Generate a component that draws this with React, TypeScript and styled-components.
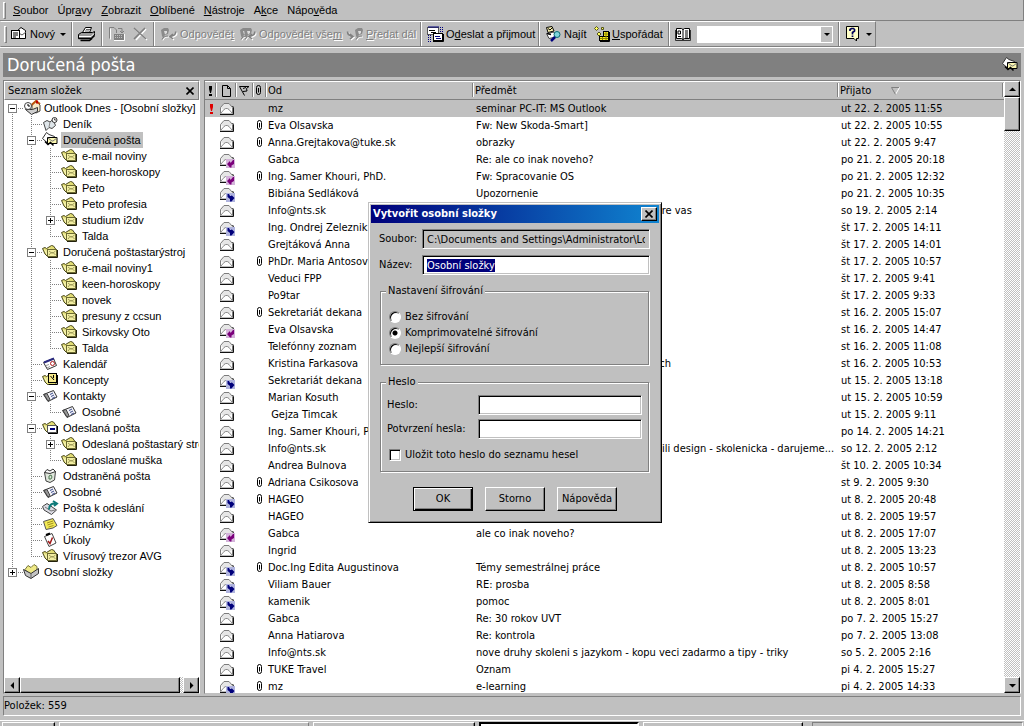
import React, { useEffect, useRef, useState } from "react";
import styled, { createGlobalStyle, css } from "styled-components";

const face = "#c0c0c0";
const shade = "#808080";
const tahoma = '"DejaVu Sans Condensed", "DejaVu Sans", sans-serif';
const system = '"Liberation Sans", Arial, sans-serif';

const GlobalStyle = createGlobalStyle`
  *, *::before, *::after { box-sizing: border-box; }
  body { margin: 0; background: ${face}; color: #000; font: 11px/16px ${system}; }
  button, input { font: inherit; color: inherit; margin: 0; }
  ::selection { background: #00007b; color: #fff; }
`;

const raised = css`
  border: 1px solid;
  border-color: #fff #000 #000 #fff;
  box-shadow: inset -1px -1px 0 ${shade};
  background: ${face};
`;

const sunken = css`
  border: 1px solid;
  border-color: ${shade} #fff #fff ${shade};
  box-shadow: inset 1px 1px 0 #000, inset -1px -1px 0 ${face};
`;

const dither = css`
  background: repeating-conic-gradient(#fff 0 25%, ${face} 0 50%) 0 0 / 2px 2px;
`;

/* ---------- window frame ---------- */

const Window = styled.div`
  position: relative;
  display: flex;
  flex-direction: column;
  height: 100vh;
  overflow: hidden;
`;

const Grip = styled.span`
  width: 3px;
  height: 17px;
  margin-left: 3px;
  border: 1px solid;
  border-color: #fff ${shade} ${shade} #fff;
`;

const MenuBar = styled.nav`
  display: flex;
  align-items: center;
  flex: none;
  height: 21px;
  border-right: 1px solid ${shade};
  border-bottom: 1px solid ${shade};
`;

const MenuItem = styled.button`
  border: 0;
  padding: 0 0 0 5px;
  margin-right: 4px;
  background: none;
  line-height: 16px;
  &:first-of-type { margin-left: 2px; }
`;

const ToolBand = styled.div`
  display: flex;
  flex: none;
  height: 27px;
  border-bottom: 1px solid #fff;
`;

const Tools = styled.div`
  display: flex;
  align-items: center;
  border: 1px solid;
  border-color: #fff ${shade} ${shade} transparent;
`;

const ToolSpace = styled.span`
  width: 4px;
`;

const ToolSeparator = styled.span`
  align-self: stretch;
  width: 2px;
  margin: 0 5px;
  border-left: 1px solid ${shade};
  border-right: 1px solid #fff;
`;

const ToolButton = styled.button<{ $width: number }>`
  display: flex;
  align-items: center;
  gap: 2px;
  width: ${(p) => p.$width}px;
  height: 22px;
  padding: 0;
  border: 0;
  background: none;
  white-space: nowrap;
  svg { flex: none; }
  &:disabled { color: ${shade}; text-shadow: 1px 1px 0 #fff; }
`;

const Caret = styled.span`
  width: 0;
  border: 3px solid transparent;
  border-top-color: #000;
  border-bottom: 0;
  margin-left: 3px;
`;

const Combo = styled.div`
  display: flex;
  width: 136px;
  height: 17px;
  background: #fff;
  border: 1px solid #fff;
  margin-left: 6px;
  input { flex: 1; min-width: 0; border: 0; padding: 0 2px; background: none; outline: 0; }
  button {
    width: 11px;
    padding: 0;
    border: 0;
    background: ${face};
    display: flex;
    align-items: center;
    justify-content: center;
  }
  ${Caret} { margin: 0; }
`;

const Banner = styled.header`
  display: flex;
  align-items: center;
  justify-content: space-between;
  flex: none;
  height: 24px;
  margin: 5px 3px 3px;
  padding: 0 3px 0 4px;
  background: ${shade};
  color: #fff;
  h1 { margin: 0; font: 18px/24px ${tahoma}; }
`;

const Main = styled.main`
  display: grid;
  grid-template-columns: 197px minmax(0, 1fr);
  gap: 4px;
  flex: 1;
  min-height: 0;
  margin: 0 3px;
`;

const Pane = styled.section`
  display: flex;
  min-height: 0;
  min-width: 0;
  overflow: hidden;
  background: #fff;
  border: 1px solid;
  border-color: ${shade} #fff ${face} ${shade};
`;

const FolderPane = styled(Pane)`
  flex-direction: column;
`;

const PaneTitle = styled.div`
  display: flex;
  align-items: center;
  justify-content: space-between;
  flex: none;
  height: 19px;
  padding: 0 4px 0 3px;
  background: ${face};
  border: 1px solid;
  border-color: #fff ${shade} ${shade} #fff;
  font: 11px/16px ${tahoma};
  button { display: flex; padding: 0; border: 0; background: none; }
`;

const StatusBar = styled.footer`
  flex: none;
  height: 20px;
  margin: 2px 3px 0;
  border: 1px solid;
  border-color: ${shade} #fff #fff ${shade};
  font: 11px/18px ${tahoma};
`;

const TaskBar = styled.div`
  display: flex;
  flex: none;
  height: 6px;
  margin-top: 4px;
  padding: 1px 1px 0 2px;
  border-top: 1px solid #fff;
  overflow: hidden;
`;

const TaskSlot = styled.span<{ $width?: number; $kind: "button" | "active" | "bar" | "tray" }>`
  height: 20px;
  margin-right: 4px;
  ${(p) => (p.$width ? `width: ${p.$width}px;` : "flex: 1; margin-left: 5px; margin-right: 0;")}
  ${(p) => p.$kind === "button" && raised}
  ${(p) => p.$kind === "active" && css`border: 2px solid #000; border-right-color: #fff; background: #fff;`}
  ${(p) => p.$kind === "bar" && css`border: solid #fff; border-width: 1px 0 0 1px; border-right: 1px solid ${shade};`}
  ${(p) => p.$kind === "tray" && css`border: 1px solid; border-color: ${shade} #fff #fff ${shade};`}
`;

/* ---------- scroll bars ---------- */

const ScrollButton = styled.button`
  ${raised}
  display: flex;
  align-items: center;
  justify-content: center;
  flex: none;
  width: 16px;
  height: 16px;
  padding: 0;
`;

const Track = styled.div<{ $across?: boolean }>`
  ${dither}
  display: flex;
  flex: none;
  flex-direction: ${(p) => (p.$across ? "row" : "column")};
`;

const Thumb = styled.div<{ $length?: number }>`
  ${raised}
  ${(p) => (p.$length ? `height: ${p.$length}px;` : "flex: 1;")}
`;

const TrackGap = styled.span<{ $size?: number }>`
  ${(p) => (p.$size ? `width: ${p.$size}px;` : "flex: 1;")}
`;

const arrowPaths = {
  up: "M0 5h7L3.500 1.500z",
  down: "M0 2h7L3.500 5.500z",
  left: "M5 0v7L1.500 3.500z",
  right: "M2 0v7L5.500 3.500z",
};

const Arrow = ({ to }: { to: keyof typeof arrowPaths }) => (
  <svg width="7" height="7" viewBox="0 0 7 7"><path d={arrowPaths[to]} /></svg>
);

/* ---------- icons ---------- */

const Pic = ({ children, w = 16, h = 16 }: { children: React.ReactNode; w?: number; h?: number }) => (
  <svg width={w} height={h} viewBox={`0 0 ${w} ${h}`} fill="none" stroke="#000" aria-hidden="true">
    {children}
  </svg>
);

const FolderBack = () => (
  <>
    <path d="M5.500 12.500L3 10L0.500 4.500L3 3.500L4.500 4.500L9.500 1.500L11.500 2L14 5.500V12.500z" fill="#e2dd74" stroke="#4c4a20" />
    <path d="M2.500 5.500L5 10.500V6L8 4.500" fill="none" stroke="#f8f6bc" />
  </>
);

const MailFolder = () => (
  <Pic>
    <FolderBack />
    <rect x="5.500" y="5.500" width="9" height="7" fill="#f3efa2" stroke="#6b6932" />
    <path d="M7 11l2-2.500h2L13.500 11M7 7l2.500 2h1.500L13.500 7" stroke="#a29e5c" />
    <path d="M6 13.500h9.500V6" stroke="#22210c" />
  </Pic>
);

const Inbox = () => (
  <Pic>
    <path d="M0.500 6.500L4.500 0.500L7 2.500L12.500 4.500V7L5 10.500z" fill="#fff" stroke="#333" />
    <path d="M5.500 5.500h9.500v6H5.500z" fill="#fbf7b0" />
    <path d="M6 6l4 3h1l4-3" stroke="#777" />
    <path d="M3 9.500l3 3 2.500-2 3 3" strokeWidth="1.500" />
  </Pic>
);

const TodayIcon = () => (
  <Pic w={18}>
    <path d="M9 5l4-4 4 4v6l-4 2-4-2z" fill="#f7e9c8" stroke="#444" />
    <path d="M8 5.500L13 1l4 3" stroke="#b8540a" strokeWidth="2" />
    <path d="M14 0.500v3" stroke="#c00000" strokeWidth="2" />
    <path d="M2.500 9.500l6 5 6-3v-4l-5 2z" fill="#cfcfcf" stroke="#333" />
    <circle cx="5" cy="6" r="3.500" fill="#fff" stroke="#444" />
    <path d="M5 4v2h2" />
  </Pic>
);

const JournalIcon = () => (
  <Pic>
    <path d="M1.500 6.500L5 4.500L8 6L11 3.500L13.500 9.500L10 12.500L7 11.500L4 14.500z" fill="#dfe6ea" stroke="#444" />
    <path d="M8 6l-1 5" stroke="#888" />
    <circle cx="12.500" cy="4" r="2.500" fill="#fff" stroke="#333" />
    <path d="M12.500 2.500V4H14" stroke="#444" />
  </Pic>
);

const CalendarIcon = () => (
  <Pic>
    <path d="M1.500 6.500L11.500 2.500L14.500 9.500L5.500 13.500z" fill="#fff" stroke="#333" />
    <path d="M2 6.500L12 2.500" stroke="#2a2a80" strokeWidth="2" />
    <path d="M4 9.500l3-1M5 12l3-1.500" stroke="#999" />
    <circle cx="10.500" cy="7.500" r="2" stroke="#b02020" />
  </Pic>
);

const DraftsIcon = () => (
  <Pic>
    <FolderBack />
    <path d="M7 12.500h8.500V3" />
    <rect x="6.500" y="1.500" width="8" height="9" fill="#f6e98a" />
    <path d="M8.500 4l3.500 4M11.500 3v3" />
  </Pic>
);

const ContactsIcon = () => (
  <Pic>
    <path d="M1.500 6.500L11.500 2.500L15 9L6 13.500z" fill="#f2f2f6" stroke="#333" />
    <path d="M2 6.500l3-1L8 11.500l-2 1.500z" fill="#9a9a9a" stroke="#444" />
    <path d="M8 6.500l3-1.500M9 8.500l3-1.500M10 10.500l3-1.500" stroke="#3a4a8c" />
  </Pic>
);

const SentIcon = () => (
  <Pic>
    <FolderBack />
    <rect x="5.500" y="5.500" width="9" height="7" fill="#fff" stroke="#555" />
    <path d="M8 9h5" stroke="#00007b" strokeWidth="2" />
    <path d="M6 13.500h9.500V6" />
  </Pic>
);

const TrashIcon = () => (
  <Pic>
    <path d="M2.500 4.500L4 13L8 14.500L12.500 12L13.500 3.500z" fill="#dfe6dc" stroke="#444" />
    <path d="M2.500 4.500L5 1.500L8 3L11 1L13.500 3.500L8 5.500z" fill="#fff" stroke="#333" />
    <path d="M7 8l2-1 1 2-1 2-2 0z" stroke="#4d7a50" />
  </Pic>
);

const OutboxIcon = () => (
  <Pic w={17}>
    <path d="M0.500 6.500L5 3.500L14.500 10L9.500 14.500L2 10z" fill="#dcdce4" stroke="#444" />
    <path d="M3 7l6 4 4-1" stroke="#777" />
    <path d="M7 9.500C7 5 10 3 13.500 3.500M11 1l4 2.500L12 6" stroke="#0f7a7a" strokeWidth="2" />
  </Pic>
);

const NotesIcon = () => (
  <Pic>
    <path d="M1.500 5.500L11 2.500L15 9.500L11 12L4 13.500z" fill="#f3ea55" stroke="#555" />
    <path d="M5 7l6-2M5.500 9l6-2M6.500 11l5-1.500" stroke="#a09020" />
  </Pic>
);

const TasksIcon = () => (
  <Pic>
    <path d="M2.500 4.500L10 1.500L14 11L7 14.500z" fill="#fff" stroke="#444" />
    <path d="M4 3l4-1.500" strokeWidth="2" />
    <path d="M6 9l2 2.500L10.500 5.500" stroke="#a01818" strokeWidth="1.500" />
  </Pic>
);

const StoreIcon = () => (
  <Pic>
    <path d="M2 5.500l3-4 3 2 3-3 3 2v4l-6 5z" fill="#efe985" stroke="#77753a" />
    <path d="M0.500 5.500L8 9.500L15.500 4.500V9.500L8 14.500L2.500 11.500z" fill="#c4c4c4" stroke="#333" />
    <path d="M8 10v4" stroke="#666" />
  </Pic>
);

const folderIcons = {
  today: TodayIcon, journal: JournalIcon, inbox: Inbox, mail: MailFolder, calendar: CalendarIcon,
  drafts: DraftsIcon, contacts: ContactsIcon, sent: SentIcon, trash: TrashIcon, outbox: OutboxIcon,
  notes: NotesIcon, tasks: TasksIcon, store: StoreIcon,
};

type MailState = "read" | "replied" | "forwarded";

const Envelope = ({ state }: { state: MailState }) => (
  <Pic w={17}>
    <path d="M1.500 12.500V6.500L5 2.500H10L13.500 6.500V12.500z" fill="#e6e6e6" stroke="#7c7c7c" />
    <path d="M2 12.500V7L4.500 9H5.500L7 8H8L9.500 9H10.500L13 7V12.500z" fill="#fff" stroke="none" />
    <path d="M2 12L5 8.500L6.500 7.500H8.500L10 8.500L13 12" stroke="#8c8c8c" />
    <path d="M1 13.500H14.500V6.500L13.500 5" stroke="#111" />
    {state !== "read" && (
      <>
        <rect x="7" y="7" width="9" height="9" fill={state === "replied" ? "#d4b4da" : "#b0b4de"} stroke="none" />
        <path
          d={
            state === "replied"
              ? "M8 12L11 9V10.500H12L14 8H15V12L12.500 13.500V15.500H11z"
              : "M15.500 12L12.500 9V10H11L10 8H8.500V11L11 13V15.500H12.500z"
          }
          fill={state === "replied" ? "#7b007b" : "#00007b"}
          stroke="none"
        />
      </>
    )}
  </Pic>
);

const ClipIcon = () => (
  <Pic w={10} h={11}>
    <rect x="1.500" y="0.500" width="4" height="9" rx="2" />
    <path d="M3.500 3v4.500M1.500 3v5" />
  </Pic>
);

const BangIcon = ({ color }: { color: string }) => (
  <Pic w={5} h={12}>
    <path d="M1 1h3v3L3 8H2L1 4z" fill={color} stroke="none" />
    <rect x="1" y="9" width="3" height="2" fill={color} stroke="none" />
  </Pic>
);

const PageIcon = () => (
  <Pic w={11} h={12}><path d="M1.500 0.500H6.500L9.500 3.500V11.500H1.500zM6.500 0.500V3.500H9.500" /></Pic>
);

const FlagIcon = () => (
  <Pic w={11} h={12}><path d="M0.500 1.500H10L7.500 3.500L8 6L4 6.500M0.500 1.500L5.500 10.500M4 3.500l3-1" /></Pic>
);

const CrossIcon = ({ size = 8, width = 1.6 }: { size?: number; width?: number }) => (
  <svg width={size} height={size} viewBox="0 0 8 8" stroke="#000" strokeWidth={width}>
    <path d="M0.500 0.500L7.500 7.500M7.500 0.500L0.500 7.500" />
  </svg>
);

const NewMailIcon = () => (
  <Pic w={17}>
    <path d="M5.500 5.500L10 1.500L14.500 4.500V12.500H5.500z" fill="#fff" />
    <path d="M6 6l5 3 4-3" stroke="#555" />
    <rect x="0.500" y="4.500" width="8" height="8" fill="#fff" />
    <path d="M2 7h5M2 9h5M2 11h3" />
  </Pic>
);

const PrinterIcon = () => (
  <Pic w={18}>
    <path d="M4.500 6.500L7.500 1.500H13.500L11.500 6.500" fill="#fff" />
    <path d="M8 3.500h4M7 5h4" stroke="#666" />
    <path d="M0.500 8.500L3.500 6.500H14.500L16.500 5.500V9L13.500 12.500H0.500z" fill="#9a9a9a" />
    <path d="M1 10.500h12L16 7.500" stroke="#fff" />
    <path d="M0.500 12.500H13.500L16.500 9.500M2.500 14.500H11.500L14 12.500" strokeWidth="1.500" />
  </Pic>
);

const DisabledMove = () => (
  <Pic w={17}>
    <path d="M1.500 12.500V1.500H6L8.500 4V7" stroke="#808080" />
    <path d="M2.500 13.500V2.500" stroke="#fff" />
    <rect x="6" y="8" width="10" height="6" fill="#808080" stroke="none" />
    <path d="M7 9.500h8M7 11.500h8" stroke="#c0c0c0" strokeDasharray="1 1" />
    <path d="M10 2.500h4v4M12 5l2 2 2-2" stroke="#808080" />
    <path d="M6 14.500h10.500V8" stroke="#fff" />
  </Pic>
);

const DisabledDelete = () => (
  <Pic>
    <path d="M3 3L15 14M14 3L4 14" stroke="#fff" strokeWidth="1.500" />
    <path d="M2 2L14 13M13 2L2 13" stroke="#808080" strokeWidth="1.600" />
  </Pic>
);

const HeadShape = ({ x }: { x: number }) => (
  <g transform={`translate(${x} 1)`}>
    <path d="M2 13.500C3 10.500 5 10 8 10" stroke="#fff" />
    <path d="M1 9L0 3L3 1H7L8 3L7 7L4 8L2 11z" fill="#8a8a8a" stroke="none" />
    <path d="M3 4h3v2L4 7.500z" fill="#dcdcdc" stroke="none" />
    <path d="M1 12.500C2 10 4 9 7 9" stroke="#808080" />
  </g>
);

const DisabledReply = ({ double }: { double?: boolean }) => (
  <Pic w={18}>
    <HeadShape x={1} />
    {double && <HeadShape x={5} />}
    <path d="M16.500 6.500C17.500 9 15 11 11 11.500M14 9l-3 2.500L14 14" stroke="#fff" strokeWidth="1.500" />
    <path d="M15.500 5.500C16.500 8 14 10 10 10.500M13 8L10 10.500L13 13" stroke="#808080" strokeWidth="1.600" />
  </Pic>
);

const DisabledForward = () => (
  <Pic w={18}>
    <HeadShape x={9} />
    <path d="M2.500 6.500C2.500 9 4 11 8 11.500M5 9l3 2.500L5 14" stroke="#fff" strokeWidth="1.500" />
    <path d="M1.500 5.500C1.500 8 3 10 7 10.500M4 8l3 2.500L4 13" stroke="#808080" strokeWidth="1.600" />
  </Pic>
);

const SendReceiveIcon = () => (
  <Pic w={17}>
    <path d="M1.500 9v7M3.500 9v7M13.500 1v6M15.500 1v6" stroke="#00007b" strokeDasharray="1 1" />
    <rect x="0.500" y="1.500" width="11" height="7" fill="#fff" stroke="#555" />
    <path d="M1 1h11" stroke="#00007b" />
    <path d="M2 4.500h6M4 6.500h5" />
    <rect x="6.500" y="7.500" width="9" height="7" fill="#fff" />
    <path d="M8 10.500h5M9 12.500h5" stroke="#00007b" />
    <path d="M6 15.500h10.500V8" />
  </Pic>
);

const FindIcon = () => (
  <Pic w={17}>
    <path d="M1.500 1.500L7 0.500L9 5L3 6.500z" fill="#fff7b0" />
    <path d="M3 2.500l2 1.500 2-2" />
    <path d="M1.500 7.500L9 6L11 11L4 12.500z" fill="#fff" stroke="#444" />
    <path d="M2 7.500l4 1" strokeWidth="1.500" />
    <circle cx="12" cy="8.500" r="3" fill="#7fd4dc" stroke="#0a6a72" />
    <path d="M10 11L6 15" stroke="#00007b" strokeWidth="2.500" />
  </Pic>
);

const ArrangeIcon = () => (
  <Pic>
    <path d="M2.500 0.500l2 2-2 2-2-2zM7.500 1.500h2v2H7.500zM5 6l2 2-2 2-2-2z" fill="#ffff60" stroke="#55551a" />
    <rect x="5.500" y="10.500" width="9" height="4" fill="#ffef20" />
    <rect x="9.500" y="5.500" width="5" height="5" fill="#ffef20" />
    <path d="M10 8h4M12 6v8M8.500 11v3M6 12.500h8" stroke="#8b8400" />
    <path d="M6 15.500h9.500V6" />
  </Pic>
);

const BookIcon = () => (
  <Pic>
    <path d="M1.500 2.500H6.500L8 3.500L9.500 2.500H14.500V12.500H9.500L8 13.500L6.500 12.500H1.500z" fill="#fff" />
    <path d="M8 3v11M3 5h2.500v3H3zM3 10.500h3M10 5h3M10 7h3M10 9h3M10 11h3" />
    <path d="M0.500 4v10.500H15.500V4" stroke="#333" />
  </Pic>
);

const HelpIcon = () => (
  <Pic>
    <path d="M1.500 0.500h12v12h-2v2.500l-2.500-2.500H1.500z" fill="#ffffc8" />
    <path d="M5 5V3.500L6.500 2.500h2L9.500 3.500V5L7.500 6.500V8.500M7.500 9.500v1.500" stroke="#00005a" strokeWidth="1.700" />
  </Pic>
);

/* ---------- folder tree ---------- */

interface Folder {
  name: string;
  icon: keyof typeof folderIcons;
  children?: Folder[];
  closed?: boolean;
  current?: boolean;
}

const mailFolders = (...names: string[]): Folder[] => names.map((name) => ({ name, icon: "mail" }));

const folders: Folder[] = [
  {
    name: "Outlook Dnes - [Osobní složky]",
    icon: "today",
    children: [
      { name: "Deník", icon: "journal" },
      {
        name: "Doručená pošta",
        icon: "inbox",
        current: true,
        children: [
          ...mailFolders("e-mail noviny", "keen-horoskopy", "Peto", "Peto profesia"),
          { name: "studium i2dv", icon: "mail", closed: true },
          ...mailFolders("Talda"),
        ],
      },
      {
        name: "Doručená poštastarýstroj",
        icon: "mail",
        children: mailFolders("e-mail noviny1", "keen-horoskopy", "novek", "presuny z ccsun", "Sirkovsky Oto", "Talda"),
      },
      { name: "Kalendář", icon: "calendar" },
      { name: "Koncepty", icon: "drafts" },
      { name: "Kontakty", icon: "contacts", children: [{ name: "Osobné", icon: "contacts" }] },
      {
        name: "Odeslaná pošta",
        icon: "sent",
        children: [{ name: "Odeslaná poštastarý stroj", icon: "mail", closed: true }, ...mailFolders("odoslané muška")],
      },
      { name: "Odstraněná pošta", icon: "trash" },
      { name: "Osobné", icon: "contacts" },
      { name: "Pošta k odeslání", icon: "outbox" },
      { name: "Poznámky", icon: "notes" },
      { name: "Úkoly", icon: "tasks" },
      { name: "Vírusový trezor AVG", icon: "mail" },
    ],
  },
  { name: "Osobní složky", icon: "store", closed: true },
];

const Tree = styled.ul`
  flex: 1;
  min-height: 0;
  margin: 0;
  padding: 0;
  list-style: none;
  overflow: hidden;
`;

const Branch = styled.ul`
  margin: 0;
  padding: 0;
  list-style: none;
`;

const TreeRow = styled.div`
  display: flex;
  height: 16px;
`;

const dotsDown = `repeating-linear-gradient(180deg, ${shade} 0 1px, transparent 1px 2px)`;
const dotsAcross = `repeating-linear-gradient(90deg, ${shade} 0 1px, transparent 1px 2px)`;

const guides = {
  none: "none",
  through: `${dotsDown} 8px 0 / 1px 100% no-repeat`,
  tee: `${dotsDown} 8px 0 / 1px 100% no-repeat, ${dotsAcross} 8px 8px / 11px 1px no-repeat`,
  elbow: `${dotsDown} 8px 0 / 1px 8px no-repeat, ${dotsAcross} 8px 8px / 11px 1px no-repeat`,
  start: `${dotsDown} 8px 8px / 1px 8px no-repeat, ${dotsAcross} 8px 8px / 11px 1px no-repeat`,
};

const Guide = styled.span<{ $kind: keyof typeof guides }>`
  flex: none;
  width: 19px;
  height: 16px;
  padding: 4px 0 0 4px;
  background: ${(p) => guides[p.$kind]};
`;

const Toggle = styled.button`
  display: block;
  width: 9px;
  height: 9px;
  padding: 0;
  border: 1px solid ${shade};
  background: #fff;
  svg { display: block; }
`;

const FolderIcon = styled.span`
  flex: none;
  width: 19px;
  height: 16px;
  svg { display: block; }
`;

const FolderLabel = styled.span<{ $current?: boolean }>`
  padding: 0 2px;
  white-space: nowrap;
  background: ${(p) => (p.$current ? face : "none")};
`;

interface FolderItemProps {
  folder: Folder;
  trail: (keyof typeof guides)[];
  first: boolean;
  last: boolean;
}

const FolderItem = ({ folder, trail, first, last }: FolderItemProps) => {
  const [open, setOpen] = useState(!folder.closed);
  const Icon = folderIcons[folder.icon];
  const own = first ? "start" : last ? "elbow" : "tee";
  const below = [...trail, last ? "none" : "through"] as (keyof typeof guides)[];
  return (
    <li>
      <TreeRow>
        {trail.map((kind, i) => <Guide key={i} $kind={kind} />)}
        <Guide $kind={own}>
          {(folder.children || folder.closed) && (
            <Toggle aria-label={folder.name} aria-expanded={open} onClick={() => setOpen(!open)}>
              <svg width="7" height="7" stroke="#000">
                <path d={open ? "M1 3.500h5" : "M1 3.500h5M3.500 1v5"} />
              </svg>
            </Toggle>
          )}
        </Guide>
        <FolderIcon><Icon /></FolderIcon>
        <FolderLabel $current={folder.current}>{folder.name}</FolderLabel>
      </TreeRow>
      {open && folder.children && (
        <Branch>
          {folder.children.map((child, i, all) => (
            <FolderItem key={i} folder={child} trail={below} first={false} last={i === all.length - 1} />
          ))}
        </Branch>
      )}
    </li>
  );
};

/* ---------- message list ---------- */

interface Message {
  from: string;
  subject: string;
  received: string;
  state?: MailState;
  clip?: boolean;
  urgent?: boolean;
}

const messages: Message[] = [
  { from: "mz", subject: "seminar PC-IT: MS Outlook", received: "ut 22. 2. 2005 11:55", urgent: true },
  { from: "Eva Olsavska", subject: "Fw: New Skoda-Smart]", received: "ut 22. 2. 2005 10:55", clip: true },
  { from: "Anna.Grejtakova@tuke.sk", subject: "obrazky", received: "ut 22. 2. 2005 9:47", clip: true },
  { from: "Gabca", subject: "Re: ale co inak noveho?", received: "po 21. 2. 2005 20:18", state: "replied" },
  { from: "Ing. Samer Khouri, PhD.", subject: "Fw: Spracovanie OS", received: "po 21. 2. 2005 12:32", state: "replied", clip: true },
  { from: "Bibiána Sedláková", subject: "Upozornenie", received: "po 21. 2. 2005 10:35", state: "forwarded" },
  { from: "Info@nts.sk", subject: "Ponuka novych skoleni a seminarov pre vas", received: "so 19. 2. 2005 2:14" },
  { from: "Ing. Ondrej Zeleznik", subject: "", received: "št 17. 2. 2005 14:11", state: "forwarded" },
  { from: "Grejtáková Anna", subject: "", received: "št 17. 2. 2005 14:01" },
  { from: "PhDr. Maria Antosova", subject: "", received: "št 17. 2. 2005 10:57", clip: true },
  { from: "Veduci FPP", subject: "", received: "št 17. 2. 2005 9:41" },
  { from: "Po9tar", subject: "", received: "št 17. 2. 2005 9:33" },
  { from: "Sekretariát dekana", subject: "", received: "st 16. 2. 2005 15:07", clip: true },
  { from: "Eva Olsavska", subject: "", received: "st 16. 2. 2005 14:47", state: "replied" },
  { from: "Telefónny zoznam", subject: "", received: "st 16. 2. 2005 11:08" },
  { from: "Kristina Farkasova", subject: "Oznamenie o doktorskych prednaskach", received: "st 16. 2. 2005 10:53" },
  { from: "Sekretariát dekana", subject: "", received: "ut 15. 2. 2005 13:18", state: "forwarded" },
  { from: "Marian Kosuth", subject: "", received: "ut 15. 2. 2005 10:59" },
  { from: " Gejza Timcak", subject: "", received: "ut 15. 2. 2005 9:11" },
  { from: "Ing. Samer Khouri, PhD.", subject: "", received: "po 14. 2. 2005 14:21" },
  { from: "Info@nts.sk", subject: "Skolenia pre vas - ako sa znovu zmenili design - skolenicka - darujeme...", received: "so 12. 2. 2005 2:12" },
  { from: "Andrea Bulnova", subject: "", received: "št 10. 2. 2005 10:34" },
  { from: "Adriana Csikosova", subject: "", received: "st 9. 2. 2005 9:30", clip: true },
  { from: "HAGEO", subject: "", received: "ut 8. 2. 2005 20:48", state: "forwarded", clip: true },
  { from: "HAGEO", subject: "", received: "ut 8. 2. 2005 19:57" },
  { from: "Gabca", subject: "ale co inak noveho?", received: "ut 8. 2. 2005 17:07", state: "replied" },
  { from: "Ingrid", subject: "", received: "ut 8. 2. 2005 13:23" },
  { from: "Doc.Ing Edita Augustinova", subject: "Témy semestrálnej práce", received: "ut 8. 2. 2005 10:57", state: "forwarded", clip: true },
  { from: "Viliam Bauer", subject: "RE: prosba", received: "ut 8. 2. 2005 8:58", state: "forwarded" },
  { from: "kamenik", subject: "pomoc", received: "ut 8. 2. 2005 8:01", state: "forwarded" },
  { from: "Gabca", subject: "Re: 30 rokov UVT", received: "po 7. 2. 2005 15:27" },
  { from: "Anna Hatiarova", subject: "Re: kontrola", received: "po 7. 2. 2005 13:08" },
  { from: "Info@nts.sk", subject: "nove druhy skoleni s jazykom - kopu veci zadarmo a tipy - triky", received: "so 5. 2. 2005 2:16" },
  { from: "TUKE Travel", subject: "Oznam", received: "pi 4. 2. 2005 15:27", clip: true },
  { from: "mz", subject: "e-learning", received: "pi 4. 2. 2005 14:33", state: "forwarded", clip: true },
];

const ListScroll = styled.div`
  flex: 1;
  min-width: 0;
  overflow: hidden;
`;

const MailTable = styled.table`
  width: 100%;
  table-layout: fixed;
  border-collapse: separate;
  border-spacing: 0;
  font: 11px/17px ${tahoma};
`;

const Col = styled.col<{ $width?: number }>`
  ${(p) => p.$width && `width: ${p.$width}px;`}
`;

const HeadCell = styled.th`
  height: 19px;
  padding: 0 0 0 1px;
  font-weight: normal;
  line-height: 15px;
  text-align: left;
  white-space: pre;
  border-top: 1px solid #fff;
  border-bottom: 1px solid ${shade};
  background:
    linear-gradient(${shade}, ${shade}) right 1px top 1px / 1px 14px no-repeat,
    linear-gradient(#fff, #fff) right 0 top 1px / 1px 14px no-repeat,
    ${face};
  svg { display: inline-block; vertical-align: middle; }
`;

const IconHead = styled(HeadCell)`
  text-align: center;
  padding: 0 2px 0 0;
  svg { display: block; margin: 0 auto; }
`;

const MailRow = styled.tr<{ $selected?: boolean }>`
  background: ${(p) => (p.$selected ? face : "#fff")};
`;

const Cell = styled.td`
  height: 17px;
  padding: 0 0 0 2px;
  white-space: pre;
  overflow: hidden;
  text-overflow: ellipsis;
`;

const SenderCell = styled(Cell)`
  padding-left: 1px;
`;

const IconCell = styled.td`
  height: 17px;
  padding: 0 0 0 1px;
  svg { display: block; margin: 0 auto; }
`;

const SortMark = styled.span`
  padding-left: 20px;
`;

/* ---------- dialog ---------- */

const Dialog = styled.form`
  position: absolute;
  left: 368px;
  top: 202px;
  width: 294px;
  padding: 2px;
  background: ${face};
  border: 1px solid;
  border-color: ${face} #000 #000 ${face};
  box-shadow: inset 1px 1px 0 #fff, inset -1px -1px 0 ${shade};
  font: 11px/16px ${tahoma};
`;

const TitleBar = styled.div`
  display: flex;
  align-items: center;
  justify-content: space-between;
  height: 18px;
  padding: 0 2px;
  background: linear-gradient(90deg, #00007b, #1084d0);
  color: #fff;
  h2 { margin: 0; font: bold 11px/18px ${tahoma}; }
`;

const CloseButton = styled.button`
  ${raised}
  display: flex;
  align-items: center;
  justify-content: center;
  width: 16px;
  height: 14px;
  padding: 0;
`;

const DialogBody = styled.div`
  padding: 6px 9px 9px 8px;
`;

const Field = styled.label<{ $label: number; $gap: number }>`
  display: grid;
  grid-template-columns: ${(p) => p.$label}px minmax(0, 1fr);
  align-items: center;
  margin-bottom: ${(p) => p.$gap}px;
  white-space: nowrap;
`;

const TextBox = styled.input`
  ${sunken}
  height: 20px;
  width: 100%;
  padding: 2px 4px;
  line-height: 14px;
  border-radius: 0;
  outline: 0;
  background: #fff;
  &:read-only { background: ${face}; }
`;

const Group = styled.fieldset`
  margin: 0 1px 9px;
  padding: 0 6px;
  border: 1px solid ${shade};
  box-shadow: 1px 1px 0 #fff, inset 1px 1px 0 #fff;
  legend {
    margin-left: -1px;
    padding: 0 2px;
    background: ${face};
    line-height: 16px;
  }
`;

const Option = styled.label`
  display: flex;
  align-items: center;
  gap: 4px;
  height: 16px;
  padding-left: 2px;
`;

const Options = styled.div`
  padding: 10px 0 7px;
`;

const Radio = styled.input`
  appearance: none;
  width: 12px;
  height: 12px;
  border-radius: 50%;
  border: 1px solid;
  border-color: ${shade} #fff #fff ${shade};
  box-shadow: inset 1px 1px 0 #000;
  background: #fff;
  &:checked { background: radial-gradient(circle, #000 2px, #fff 3px); }
`;

const Check = styled.input`
  ${sunken}
  appearance: none;
  width: 12px;
  height: 12px;
  border-radius: 0;
  background: #fff;
`;

const Passwords = styled.div`
  padding: 5px 0 8px;
`;

const Buttons = styled.div`
  display: flex;
  justify-content: center;
  gap: 12px;
  padding: 6px 0 0 1px;
`;

const PushButton = styled.button<{ $default?: boolean }>`
  ${raised}
  width: 60px;
  height: 24px;
  padding: 0;
  ${(p) => p.$default && css`
    border-color: #000;
    box-shadow: inset 1px 1px 0 #fff, inset -1px -1px 0 #000, inset -2px -2px 0 ${shade};
  `}
`;

const CreateStoreDialog = () => {
  const name = useRef<HTMLInputElement>(null);
  useEffect(() => {
    name.current?.focus();
    name.current?.select();
  }, []);
  return (
    <Dialog role="dialog" aria-labelledby="dialog-title" onSubmit={(e) => e.preventDefault()}>
      <TitleBar>
        <h2 id="dialog-title">Vytvořit osobní složky</h2>
        <CloseButton type="button" aria-label="Zavřít"><CrossIcon /></CloseButton>
      </TitleBar>
      <DialogBody>
        <Field $label={43} $gap={6}>
          Soubor:
          <TextBox readOnly defaultValue="C:\Documents and Settings\Administrator\Local Settings" />
        </Field>
        <Field $label={43} $gap={8}>
          Název:
          <TextBox ref={name} defaultValue="Osobní složky" />
        </Field>
        <Group>
          <legend>Nastavení šifrování</legend>
          <Options>
            <Option><Radio type="radio" name="cipher" />Bez šifrování</Option>
            <Option><Radio type="radio" name="cipher" defaultChecked />Komprimovatelné šifrování</Option>
            <Option><Radio type="radio" name="cipher" />Nejlepší šifrování</Option>
          </Options>
        </Group>
        <Group>
          <legend>Heslo</legend>
          <Passwords>
            <Field $label={91} $gap={4}>Heslo:<TextBox type="password" /></Field>
            <Field $label={91} $gap={8}>Potvrzení hesla:<TextBox type="password" /></Field>
            <Option><Check type="checkbox" />Uložit toto heslo do seznamu hesel</Option>
          </Passwords>
        </Group>
        <Buttons>
          <PushButton $default>OK</PushButton>
          <PushButton type="button">Storno</PushButton>
          <PushButton type="button">Nápověda</PushButton>
        </Buttons>
      </DialogBody>
    </Dialog>
  );
};

/* ---------- page ---------- */

export default function App() {
  return (
    <Window>
      <GlobalStyle />
      <MenuBar>
        <Grip />
        <MenuItem><u>S</u>oubor</MenuItem>
        <MenuItem>Úpr<u>a</u>vy</MenuItem>
        <MenuItem><u>Z</u>obrazit</MenuItem>
        <MenuItem><u>O</u>blíbené</MenuItem>
        <MenuItem><u>N</u>ástroje</MenuItem>
        <MenuItem>A<u>k</u>ce</MenuItem>
        <MenuItem>Nápo<u>v</u>ěda</MenuItem>
      </MenuBar>
      <ToolBand>
        <Tools role="toolbar">
          <Grip />
          <ToolSpace />
          <ToolButton $width={55}><NewMailIcon />Nový<Caret /></ToolButton>
          <ToolSeparator />
          <ToolButton $width={18} aria-label="Tisk"><PrinterIcon /></ToolButton>
          <ToolSeparator />
          <ToolButton $width={24} disabled aria-label="Přesunout"><DisabledMove /></ToolButton>
          <ToolButton $width={16} disabled aria-label="Odstranit"><DisabledDelete /></ToolButton>
          <ToolSeparator />
          <ToolButton $width={79} disabled><DisabledReply /><span>Odpovědě<u>t</u></span></ToolButton>
          <ToolButton $width={107} disabled><DisabledReply double /><span>Odpovědět vše<u>m</u></span></ToolButton>
          <ToolButton $width={69} disabled><DisabledForward /><span><u>P</u>ředat dál</span></ToolButton>
          <ToolSeparator />
          <ToolButton $width={106}><SendReceiveIcon /><span>O<u>d</u>eslat a přijmout</span></ToolButton>
          <ToolSeparator />
          <ToolButton $width={49}><FindIcon />Najít</ToolButton>
          <ToolButton $width={69}><ArrangeIcon /><span><u>U</u>spořádat</span></ToolButton>
          <ToolSeparator />
          <ToolButton $width={16} aria-label="Adresář"><BookIcon /></ToolButton>
          <Combo>
            <input aria-label="Najít kontakt" />
            <button aria-label="Rozbalit"><Caret /></button>
          </Combo>
          <ToolSeparator />
          <ToolButton $width={30} aria-label="Nápověda"><HelpIcon /><Caret /></ToolButton>
        </Tools>
      </ToolBand>
      <Banner>
        <h1>Doručená pošta</h1>
        <Inbox />
      </Banner>
      <Main>
        <FolderPane>
          <PaneTitle>
            Seznam složek
            <button aria-label="Zavřít seznam"><CrossIcon /></button>
          </PaneTitle>
          <Tree>
            {folders.map((f, i, all) => (
              <FolderItem key={f.name} folder={f} trail={[]} first={i === 0} last={i === all.length - 1} />
            ))}
          </Tree>
          <Track $across>
            <ScrollButton aria-label="Doleva"><Arrow to="left" /></ScrollButton>
            <Thumb />
            <TrackGap $size={3} />
            <ScrollButton aria-label="Doprava"><Arrow to="right" /></ScrollButton>
          </Track>
        </FolderPane>
        <Pane>
          <ListScroll>
            <MailTable>
              <colgroup>
                <Col $width={12} /><Col $width={20} /><Col $width={17} /><Col $width={13} />
                <Col $width={207} /><Col /><Col $width={165} />
              </colgroup>
              <thead>
                <tr>
                  <IconHead aria-label="Důležitost"><BangIcon color="#000" /></IconHead>
                  <IconHead aria-label="Typ"><PageIcon /></IconHead>
                  <IconHead aria-label="Příznak"><FlagIcon /></IconHead>
                  <IconHead aria-label="Příloha"><ClipIcon /></IconHead>
                  <HeadCell>Od</HeadCell>
                  <HeadCell>Předmět</HeadCell>
                  <HeadCell>
                    Přijato
                    <SortMark>
                      <svg width="9" height="8" fill="none">
                        <path d="M8.500 0.500L4.500 7.500" stroke="#fff" />
                        <path d="M8 0.500H0.500L4.500 7.500" stroke={shade} />
                      </svg>
                    </SortMark>
                  </HeadCell>
                </tr>
              </thead>
              <tbody>
                {messages.map((m, i) => (
                  <MailRow key={i} $selected={i === 0}>
                    <IconCell>{m.urgent && <BangIcon color="#e00000" />}</IconCell>
                    <IconCell><Envelope state={m.state ?? "read"} /></IconCell>
                    <IconCell />
                    <IconCell>{m.clip && <ClipIcon />}</IconCell>
                    <SenderCell>{m.from}</SenderCell>
                    <Cell>{m.subject}</Cell>
                    <Cell>{m.received}</Cell>
                  </MailRow>
                ))}
              </tbody>
            </MailTable>
          </ListScroll>
          <Track>
            <ScrollButton aria-label="Nahoru"><Arrow to="up" /></ScrollButton>
            <Thumb $length={34} />
            <TrackGap />
            <ScrollButton aria-label="Dolů"><Arrow to="down" /></ScrollButton>
          </Track>
        </Pane>
      </Main>
      <StatusBar>Položek: 559</StatusBar>
      <TaskBar>
        <TaskSlot $kind="button" $width={53} />
        <TaskSlot $kind="bar" $width={250} />
        <TaskSlot $kind="button" $width={162} />
        <TaskSlot $kind="active" $width={160} />
        <TaskSlot $kind="button" $width={160} />
        <TaskSlot $kind="tray" />
      </TaskBar>
      <CreateStoreDialog />
    </Window>
  );
}
